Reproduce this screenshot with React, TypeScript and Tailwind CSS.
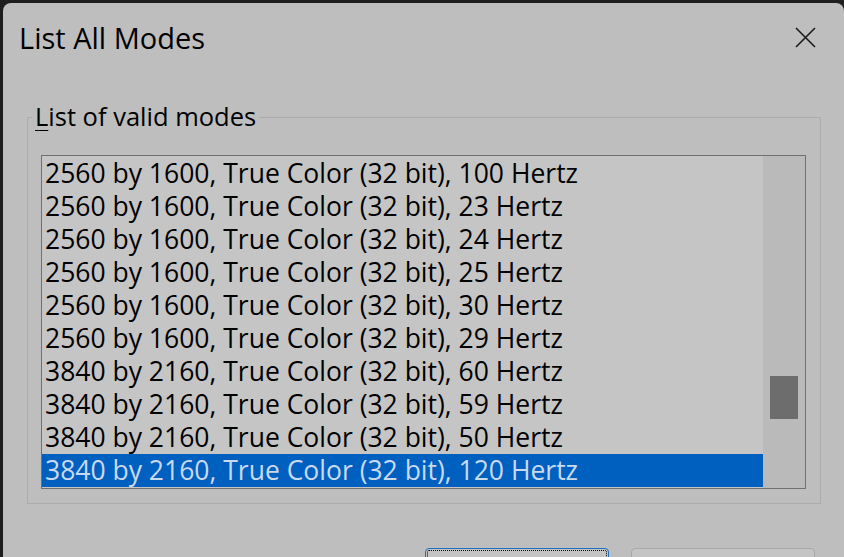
import React from "react";

const rows = [
  "2560 by 1600, True Color (32 bit), 100 Hertz",
  "2560 by 1600, True Color (32 bit), 23 Hertz",
  "2560 by 1600, True Color (32 bit), 24 Hertz",
  "2560 by 1600, True Color (32 bit), 25 Hertz",
  "2560 by 1600, True Color (32 bit), 30 Hertz",
  "2560 by 1600, True Color (32 bit), 29 Hertz",
  "3840 by 2160, True Color (32 bit), 60 Hertz",
  "3840 by 2160, True Color (32 bit), 59 Hertz",
  "3840 by 2160, True Color (32 bit), 50 Hertz",
  "3840 by 2160, True Color (32 bit), 120 Hertz",
];

export default function App() {
  return (
    <div
      className="w-[844px] h-[557px] overflow-hidden bg-[#1e1e1e] pt-[3px] pl-[3px]"
      style={{ fontFamily: '"Open Sans", "Noto Sans", sans-serif' }}
    >
      <div className="w-[841px] h-[554px] bg-[#bebebe] rounded-t-[8px] flex flex-col overflow-hidden">
        <div className="h-[69px] shrink-0 flex items-center justify-between pl-[16px] pr-[28px]">
          <span className="text-[29px] leading-none text-black pb-[1px]">List All Modes</span>
          <svg width="21" height="21" viewBox="0 0 21 21" className="block">
            <path d="M1 1 L20 20 M20 1 L1 20" stroke="#1a1a1a" strokeWidth="1.6" fill="none" />
          </svg>
        </div>
        <div className="shrink-0 mt-[45px] ml-[24px] w-[794px] h-[387px] border border-[#acacac] relative pt-[37px] pl-[13px] pr-[14px] pb-[14px]">
          <div className="absolute left-[4px] top-[-19px] bg-[#bebebe] px-[3px] text-[25.5px] leading-[34px] text-black">
            <span className="underline underline-offset-[4px] decoration-1">L</span>ist of valid modes
          </div>
          <div className="h-[334px] border border-[#707070] bg-[#c5c5c5] flex">
            <div className="flex-1 pt-[1px]">
              {rows.map((r, i) => {
                const sel = i === rows.length - 1;
                return (
                  <div
                    key={i}
                    className={
                      sel
                        ? "h-[33px] flex items-center pl-[3px] bg-[#0060c0] text-[#c9d9ee] text-[26.5px] whitespace-nowrap"
                        : "h-[33px] flex items-center pl-[3px] text-black text-[26.5px] whitespace-nowrap"
                    }
                  >
                    {r}
                  </div>
                );
              })}
            </div>
            <div className="w-[42px] bg-[#bababa] flex justify-center pt-[220px]">
              <div className="w-[28px] h-[43px] bg-[#6d6d6d]" />
            </div>
          </div>
        </div>
        <div className="shrink-0 flex pl-[422px] gap-[22px] mt-[44px]">
          <div className="w-[184px] h-[30px] rounded-[4px] border border-[#1a6fc4] bg-[#c4c4c4] p-[1px]">
            <div className="w-full h-full border border-dotted border-black rounded-[2px]" />
          </div>
          <div className="w-[184px] h-[30px] rounded-[4px] border border-[#a8a8a8] bg-[#c4c4c4]" />
        </div>
      </div>
    </div>
  );
}
